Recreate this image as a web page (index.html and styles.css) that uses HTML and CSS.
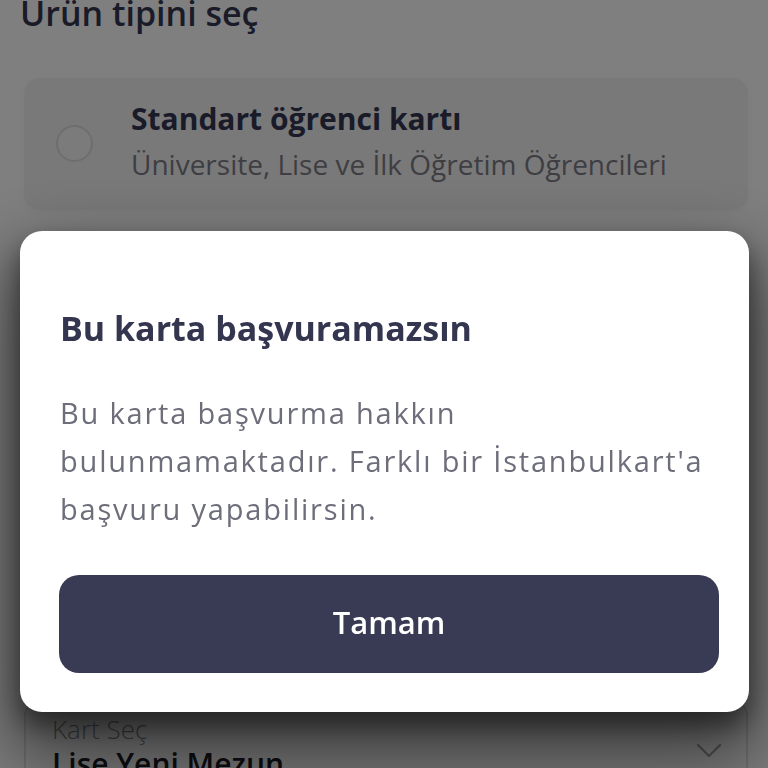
FILE: index.html
```html
<!DOCTYPE html>
<html lang="tr">
<head>
<meta charset="utf-8">
<title>Ürün tipini seç</title>
<link rel="stylesheet" href="styles.css">
</head>
<body>
<main class="page">
  <h1 class="page-title">Ürün tipini seç</h1>
  <div class="option-card">
    <span class="radio"></span>
    <div class="option-text">
      <div class="option-name">Standart öğrenci kartı</div>
      <div class="option-desc">Üniversite, Lise ve İlk Öğretim Öğrencileri</div>
    </div>
  </div>
  <div class="select-field">
    <div class="select-text">
      <div class="select-label">Kart Seç</div>
      <div class="select-value">Lise Yeni Mezun</div>
    </div>
    <svg class="chevron" width="26" height="16" viewBox="0 0 26 16"><path d="M2 3 L13 14 L24 3" fill="none" stroke="#a8a8b0" stroke-width="2.4" stroke-linecap="round" stroke-linejoin="round"/></svg>
  </div>
</main>
<div class="overlay">
  <div class="modal">
    <h2 class="modal-title">Bu karta başvuramazsın</h2>
    <p class="modal-body">Bu karta başvurma hakkın bulunmamaktadır. Farklı bir İstanbulkart'a başvuru yapabilirsin.</p>
    <button class="modal-btn">Tamam</button>
  </div>
</div>
</body>
</html>
```
FILE: styles.css
```css
html, body {
  margin: 0;
  padding: 0;
  background: #ffffff;
  font-family: "Open Sans", "Noto Sans", sans-serif;
  overflow: hidden;
  height: 768px;
}
.page {
  padding: 0 20px;
}
.page-title {
  margin: -7px 0 0 0;
  font-size: 34px;
  line-height: 40px;
  font-weight: 600;
  color: #343650;
}
.option-card {
  margin: 45px 0 0 4px;
  width: 724px;
  height: 132px;
  box-sizing: border-box;
  background: #f3f3f4;
  border-radius: 16px;
  box-shadow: 0 2px 10px rgba(0, 0, 0, 0.04);
  display: flex;
  align-items: center;
  padding-left: 32px;
  gap: 38px;
}
.radio {
  width: 33px;
  height: 33px;
  border: 2px solid #dcdce0;
  border-radius: 50%;
  background: #f6f6f7;
  flex: none;
  margin-top: -2px;
}
.option-text {
  margin-top: -5px;
}
.option-name {
  font-size: 30px;
  font-weight: 700;
  color: #343650;
  line-height: 40px;
}
.option-desc {
  font-size: 28px;
  color: #7d7d85;
  line-height: 40px;
  margin-top: 5px;
}
.select-field {
  margin: 490px 0 0 4px;
  width: 724px;
  height: 110px;
  box-sizing: border-box;
  border: 2px solid #e2e2e6;
  border-radius: 16px;
  display: flex;
  align-items: flex-start;
  justify-content: space-between;
  padding: 12px 24px 0 26px;
}
.select-label {
  font-size: 26px;
  font-weight: 300;
  color: #8a8a92;
  line-height: 30px;
}
.select-value {
  font-size: 30px;
  font-weight: 600;
  color: #1d1d27;
  line-height: 36px;
  margin-top: 2px;
}
.chevron {
  margin-top: 28px;
}
.overlay {
  position: fixed;
  inset: 0;
  background: rgba(0, 0, 0, 0.5);
  padding: 231px 0 0 20px;
  box-sizing: border-box;
}
.modal {
  width: 729px;
  height: 481px;
  box-sizing: border-box;
  background: #ffffff;
  border-radius: 22px;
  padding: 77px 30px 0 39px;
  box-shadow: 0 14px 24px rgba(0, 0, 0, 0.45), 0 36px 70px 14px rgba(0, 0, 0, 0.5);
  display: flex;
  flex-direction: column;
}
.modal-title {
  margin: 0 0 0 1px;
  font-size: 34px;
  line-height: 40px;
  font-weight: 700;
  color: #343650;
}
.modal-body {
  margin: 41px 0 0 1px;
  width: 660px;
  font-size: 29px;
  line-height: 48px;
  letter-spacing: 1.8px;
  color: #6d6e7a;
}
.modal-btn {
  margin-top: 42px;
  width: 660px;
  height: 98px;
  padding: 0 0 5px 0;
  border: none;
  border-radius: 20px;
  background: #383b53;
  color: #ffffff;
  font-family: "Open Sans", "Noto Sans", sans-serif;
  font-size: 31px;
  font-weight: 600;
}
```
